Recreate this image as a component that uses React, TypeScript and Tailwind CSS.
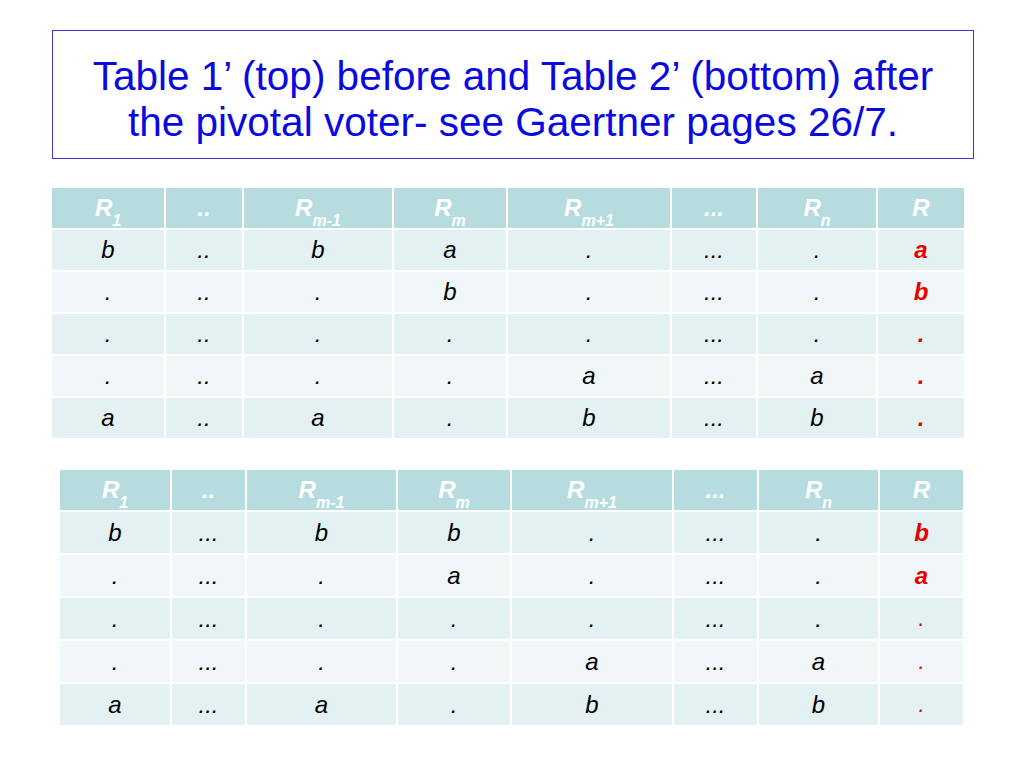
import React from "react";

type Cell = { t: string; red?: "bold" | "thin" };

const Header = ({ base, sub }: { base: string; sub?: string }) => (
  <span className="italic font-bold text-white text-[24px] leading-none">
    {base}
    {sub && <sub className="text-[16px] align-[-6px]">{sub}</sub>}
  </span>
);

const headers: { base: string; sub?: string }[] = [
  { base: "R", sub: "1" },
  { base: ".." },
  { base: "R", sub: "m-1" },
  { base: "R", sub: "m" },
  { base: "R", sub: "m+1" },
  { base: "..." },
  { base: "R", sub: "n" },
  { base: "R" },
];

const top: Cell[][] = [
  [{ t: "b" }, { t: ".." }, { t: "b" }, { t: "a" }, { t: "." }, { t: "..." }, { t: "." }, { t: "a", red: "bold" }],
  [{ t: "." }, { t: ".." }, { t: "." }, { t: "b" }, { t: "." }, { t: "..." }, { t: "." }, { t: "b", red: "bold" }],
  [{ t: "." }, { t: ".." }, { t: "." }, { t: "." }, { t: "." }, { t: "..." }, { t: "." }, { t: ".", red: "bold" }],
  [{ t: "." }, { t: ".." }, { t: "." }, { t: "." }, { t: "a" }, { t: "..." }, { t: "a" }, { t: ".", red: "bold" }],
  [{ t: "a" }, { t: ".." }, { t: "a" }, { t: "." }, { t: "b" }, { t: "..." }, { t: "b" }, { t: ".", red: "bold" }],
];

const bottom: Cell[][] = [
  [{ t: "b" }, { t: "..." }, { t: "b" }, { t: "b" }, { t: "." }, { t: "..." }, { t: "." }, { t: "b", red: "bold" }],
  [{ t: "." }, { t: "..." }, { t: "." }, { t: "a" }, { t: "." }, { t: "..." }, { t: "." }, { t: "a", red: "bold" }],
  [{ t: "." }, { t: "..." }, { t: "." }, { t: "." }, { t: "." }, { t: "..." }, { t: "." }, { t: ".", red: "thin" }],
  [{ t: "." }, { t: "..." }, { t: "." }, { t: "." }, { t: "a" }, { t: "..." }, { t: "a" }, { t: ".", red: "thin" }],
  [{ t: "a" }, { t: "..." }, { t: "a" }, { t: "." }, { t: "b" }, { t: "..." }, { t: "b" }, { t: ".", red: "thin" }],
];

function Table({ rows, cols, rowH }: { rows: Cell[][]; cols: string; rowH: string }) {
  return (
    <div className={`grid gap-[2px] bg-white ${cols}`}>
      {headers.map((h, i) => (
        <div key={"h" + i} className="h-[40px] bg-[#b6dce0] flex items-center justify-center">
          <Header base={h.base} sub={h.sub} />
        </div>
      ))}
      {rows.map((r, ri) =>
        r.map((c, ci) => (
          <div
            key={ri + "-" + ci}
            className={`${rowH} flex items-center justify-center ${ri % 2 === 0 ? "bg-[#e4f1f3]" : "bg-[#f1f7f8]"}`}
          >
            <span
              className={
                c.red === "bold"
                  ? "italic font-bold text-[#e60000] text-[24px]"
                  : c.red === "thin"
                  ? "italic text-[#e60000] text-[22px]"
                  : "italic text-black text-[24px]"
              }
            >
              {c.t}
            </span>
          </div>
        ))
      )}
    </div>
  );
}

export default function App() {
  return (
    <div
      className="w-[1024px] h-[768px] bg-white overflow-hidden"
      style={{ fontFamily: '"Liberation Sans", Arial, sans-serif' }}
    >
      <div className="ml-[52px] mt-[30px] w-[922px] h-[129px] border border-[#3a3acc] flex items-center justify-center">
        <p className="text-center text-[#0a0ae0] text-[40.5px] leading-[46px] pt-[9px]">
          Table 1’ (top) before and Table 2’ (bottom) after
          <br />
          the pivotal voter- see Gaertner pages 26/7.
        </p>
      </div>
      <div className="ml-[52px] mt-[29px] w-[912px]">
        <Table
          rows={top}
          rowH="h-[40px]"
          cols="grid-cols-[112px_76px_148px_112px_162px_84px_118px_86px]"
        />
      </div>
      <div className="ml-[60px] mt-[32px] w-[903px]">
        <Table
          rows={bottom}
          rowH="h-[41px]"
          cols="grid-cols-[110px_73px_149px_112px_160px_83px_119px_83px]"
        />
      </div>
    </div>
  );
}
